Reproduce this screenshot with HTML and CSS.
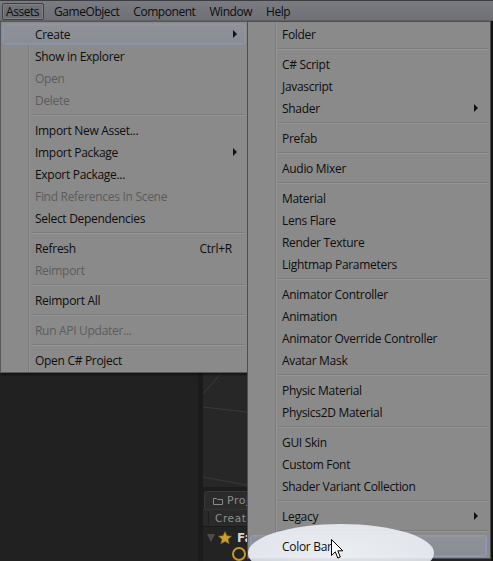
FILE: index.html
```html
<!DOCTYPE html>
<html>
<head>
<meta charset="utf-8">
<link rel="stylesheet" href="styles.css">
</head>
<body>
<div class="window">
  <div class="menubar">
    <div class="mb-item active">Assets</div>
    <div class="mb-item">GameObject</div>
    <div class="mb-item">Component</div>
    <div class="mb-item">Window</div>
    <div class="mb-item">Help</div>
  </div>
  <div class="workspace">
    <div class="hierarchy"></div>
    <div class="splitter"></div>
    <div class="rightcol">
      <div class="scene">
        <svg class="grid" width="288" height="476" viewBox="0 0 288 476">
          <line x1="0" y1="386" x2="60" y2="393" />
          <line x1="0" y1="456" x2="60" y2="467" />
          <line x1="1" y1="372" x2="20" y2="350" />
          <line x1="44" y1="476" x2="60" y2="452" />
        </svg>
      </div>
      <div class="project">
        <div class="tabs">
          <div class="tab">
            <svg class="folder" width="10" height="8" viewBox="0 0 10 8"><path d="M0.5 1.5h3l1 1h5v5h-9z" /></svg>
            <span>Project</span>
          </div>
        </div>
        <div class="toolbar"><span class="create">Create</span></div>
        <div class="tree">
          <div class="tree-row">
            <span class="tri"></span>
            <svg class="star" width="14" height="14" viewBox="0 0 14 14"><path d="M7 0.5l1.9 4.3 4.6 0.4-3.5 3 1.1 4.6L7 10.4 2.9 12.8 4 8.2 0.5 5.2l4.6-0.4z" /></svg>
            <span class="fav">Favorites</span>
          </div>
          <div class="tree-row2"><span class="ring"></span></div>
        </div>
      </div>
    </div>
    <div class="edge"></div>
  </div>

  <div class="menu menu-assets">
    <div class="item hot"><span class="label">Create</span><span class="arrow"></span></div>
    <div class="item"><span class="label">Show in Explorer</span></div>
    <div class="item disabled"><span class="label">Open</span></div>
    <div class="item disabled"><span class="label">Delete</span></div>
    <div class="sep"></div>
    <div class="item"><span class="label">Import New Asset...</span></div>
    <div class="item"><span class="label">Import Package</span><span class="arrow"></span></div>
    <div class="item"><span class="label">Export Package...</span></div>
    <div class="item disabled"><span class="label">Find References In Scene</span></div>
    <div class="item"><span class="label">Select Dependencies</span></div>
    <div class="sep"></div>
    <div class="item"><span class="label">Refresh</span><span class="shortcut">Ctrl+R</span></div>
    <div class="item disabled"><span class="label">Reimport</span></div>
    <div class="sep"></div>
    <div class="item"><span class="label">Reimport All</span></div>
    <div class="sep"></div>
    <div class="item disabled"><span class="label">Run API Updater...</span></div>
    <div class="sep"></div>
    <div class="item"><span class="label">Open C# Project</span></div>
  </div>

  <div class="menu menu-create">
    <div class="item"><span class="label">Folder</span></div>
    <div class="sep"></div>
    <div class="item"><span class="label">C# Script</span></div>
    <div class="item"><span class="label">Javascript</span></div>
    <div class="item"><span class="label">Shader</span><span class="arrow"></span></div>
    <div class="sep"></div>
    <div class="item"><span class="label">Prefab</span></div>
    <div class="sep"></div>
    <div class="item"><span class="label">Audio Mixer</span></div>
    <div class="sep"></div>
    <div class="item"><span class="label">Material</span></div>
    <div class="item"><span class="label">Lens Flare</span></div>
    <div class="item"><span class="label">Render Texture</span></div>
    <div class="item"><span class="label">Lightmap Parameters</span></div>
    <div class="sep"></div>
    <div class="item"><span class="label">Animator Controller</span></div>
    <div class="item"><span class="label">Animation</span></div>
    <div class="item"><span class="label">Animator Override Controller</span></div>
    <div class="item"><span class="label">Avatar Mask</span></div>
    <div class="sep"></div>
    <div class="item"><span class="label">Physic Material</span></div>
    <div class="item"><span class="label">Physics2D Material</span></div>
    <div class="sep"></div>
    <div class="item"><span class="label">GUI Skin</span></div>
    <div class="item"><span class="label">Custom Font</span></div>
    <div class="item"><span class="label">Shader Variant Collection</span></div>
    <div class="sep"></div>
    <div class="item"><span class="label">Legacy</span><span class="arrow"></span></div>
    <div class="sep"></div>
    <div class="item hot hot2"><span class="label lifted">Color Bar</span></div>
  </div>

  <div class="glow"></div>
  <svg class="cursor" width="13" height="21" viewBox="0 0 13 21">
    <path d="M0.5 0.5 L0.5 16.5 L4.3 12.8 L6.8 19 L9.3 18 L6.8 11.8 L11.8 11.8 Z" />
  </svg>
</div>
</body>
</html>
```

FILE: styles.css
```css
* { box-sizing: border-box; }

html, body {
  margin: 0;
  padding: 0;
}

body {
  width: 493px;
  height: 561px;
  overflow: hidden;
  background: #141414;
  font-family: "Open Sans", "Noto Sans", sans-serif;
  font-size: 12px;
  color: #111;
}

.window {
  position: relative;
  width: 493px;
  height: 561px;
  display: flex;
  flex-direction: column;
}

/* ---------- menu bar ---------- */
.menubar {
  height: 21px;
  flex: none;
  display: flex;
  align-items: center;
  padding: 1px 0 0 2px;
  border-top: 1px solid #3c3d40;
  border-bottom: 1px solid #5f6166;
  background: linear-gradient(#7a7c82, #6e7076);
}

.mb-item {
  height: 17px;
  padding: 0 3px 0 3px;
  margin-right: 6px;
  line-height: 15px;
  border: 1px solid transparent;
  color: #0d0d0d;
  letter-spacing: -0.45px;
}

.mb-item.active {
  border-color: #3d3f44;
  border-radius: 2px;
  background: linear-gradient(#72747a, #686a70);
  box-shadow: inset 0 0 0 1px #7f8187;
  padding: 0 4px 0 3px;
  margin-right: 6px;
}

/* ---------- workspace (behind menus) ---------- */
.workspace {
  flex: 1;
  display: flex;
  min-height: 0;
}

.hierarchy {
  width: 198px;
  background: #212121;
}

.splitter {
  width: 5px;
  background: #1b1b1b;
}

.rightcol {
  width: 288px;
  display: flex;
  flex-direction: column;
}

.edge {
  flex: 1;
  background: #131313;
}

.scene {
  height: 476px;
  background: #272727;
  border-bottom: 2px solid #1c1c1c;
  overflow: hidden;
}

.grid line {
  stroke: #3a3a3a;
  stroke-width: 1;
}

.project {
  flex: 1;
  background: #232323;
  display: flex;
  flex-direction: column;
}

.tabs {
  height: 20px;
  padding: 2px 0 0 1px;
  background: #1d1d1d;
}

.tab {
  height: 18px;
  width: 90px;
  border: 1px solid #383838;
  border-bottom: none;
  border-radius: 3px 3px 0 0;
  background: #2b2b2b;
  display: flex;
  align-items: center;
  padding-left: 8px;
  gap: 4px;
  font-family: "DejaVu Sans", sans-serif;
  font-size: 11px;
  letter-spacing: 0.5px;
  color: #8c8c8c;
}

.folder path {
  fill: none;
  stroke: #8a8a8a;
  stroke-width: 1;
}

.toolbar {
  height: 18px;
  background: #2a2a2a;
  border-top: 1px solid #333;
  border-bottom: 1px solid #1a1a1a;
  padding-left: 5px;
  display: flex;
  align-items: center;
}

.create {
  border-left: 1px solid #1d1d1d;
  padding-left: 6px;
  font-family: "DejaVu Sans", sans-serif;
  font-size: 10.5px;
  letter-spacing: 0.6px;
  color: #8e8e8e;
}

.tree {
  flex: 1;
  padding-top: 2px;
}

.tree-row {
  height: 18px;
  display: flex;
  align-items: center;
  padding-left: 4px;
  gap: 2px;
}

.tri {
  width: 0;
  height: 0;
  border-left: 4px solid transparent;
  border-right: 4px solid transparent;
  border-top: 8px solid #4c4c4c;
  margin-right: 1px;
}

.star path {
  fill: #c9a12a;
  stroke: #8f6f12;
  stroke-width: 0.6;
}

.fav {
  font-family: "DejaVu Sans", sans-serif;
  font-weight: bold;
  font-size: 12px;
  color: #d6d6d6;
  margin-left: 3px;
}

.tree-row2 {
  padding-left: 29px;
}

.ring {
  display: block;
  width: 14px;
  height: 14px;
  border: 2px solid #c49a22;
  border-radius: 50%;
}

/* ---------- menus ---------- */
.menu {
  position: absolute;
  top: 21px;
  background:
    linear-gradient(to right,
      transparent 27px,
      #7c7c7c 27px, #7c7c7c 28px,
      #939393 28px, #939393 29px,
      transparent 29px),
    #8a8a8a;
  border: 1px solid #585858;
  padding: 1px;
}

.menu-assets {
  left: 0;
  width: 248px;
  box-shadow: 1px 2px 2px rgba(0, 0, 0, 0.45);
}

.menu-create {
  left: 247px;
  width: 244px;
  border-color: #4e4e4e;
}

.item {
  height: 22px;
  display: flex;
  align-items: center;
  padding-left: 32px;
  padding-right: 8px;
  border: 1px solid transparent;
  white-space: nowrap;
}

.label {
  flex: 1;
  color: #0e0e0e;
  letter-spacing: -0.3px;
}

.disabled .label {
  color: #5c5c5c;
}

.shortcut {
  margin-right: 5px;
  letter-spacing: -0.25px;
  color: #0e0e0e;
}

.arrow {
  width: 0;
  height: 0;
  border-top: 4px solid transparent;
  border-bottom: 4px solid transparent;
  border-left: 4px solid #111;
  margin-right: 0;
}

.menu-create .arrow {
  margin-right: 2px;
}

.item.hot {
  border-color: #8393a8;
  border-radius: 3px;
  background: linear-gradient(#8e9298, #8a8e94);
  box-shadow: inset 0 0 0 1px #92959a;
}

.item.hot2 {
  border-color: #8a9cba;
  margin-right: 2px;
  margin-left: 1px;
  padding-left: 31px;
}

.sep {
  height: 2px;
  margin: 3px 1px 3px 29px;
  border-top: 1px solid #7b7b7b;
  border-bottom: 1px solid #969696;
}

/* ---------- annotation overlay ---------- */
.glow {
  position: absolute;
  left: 248px;
  top: 524px;
  width: 186px;
  height: 58px;
  border-radius: 50%;
  background: radial-gradient(ellipse at center,
    rgba(244, 247, 251, 0.9) 0%,
    rgba(240, 244, 250, 0.86) 74%,
    rgba(235, 240, 248, 0.55) 90%,
    rgba(235, 240, 248, 0) 100%);
  z-index: 4;
}

.label.lifted {
  position: relative;
  z-index: 5;
  flex: none;
}

.cursor {
  position: absolute;
  left: 331px;
  top: 539px;
  z-index: 6;
}

.cursor path {
  fill: #fff;
  stroke: #000;
  stroke-width: 1;
}
```
